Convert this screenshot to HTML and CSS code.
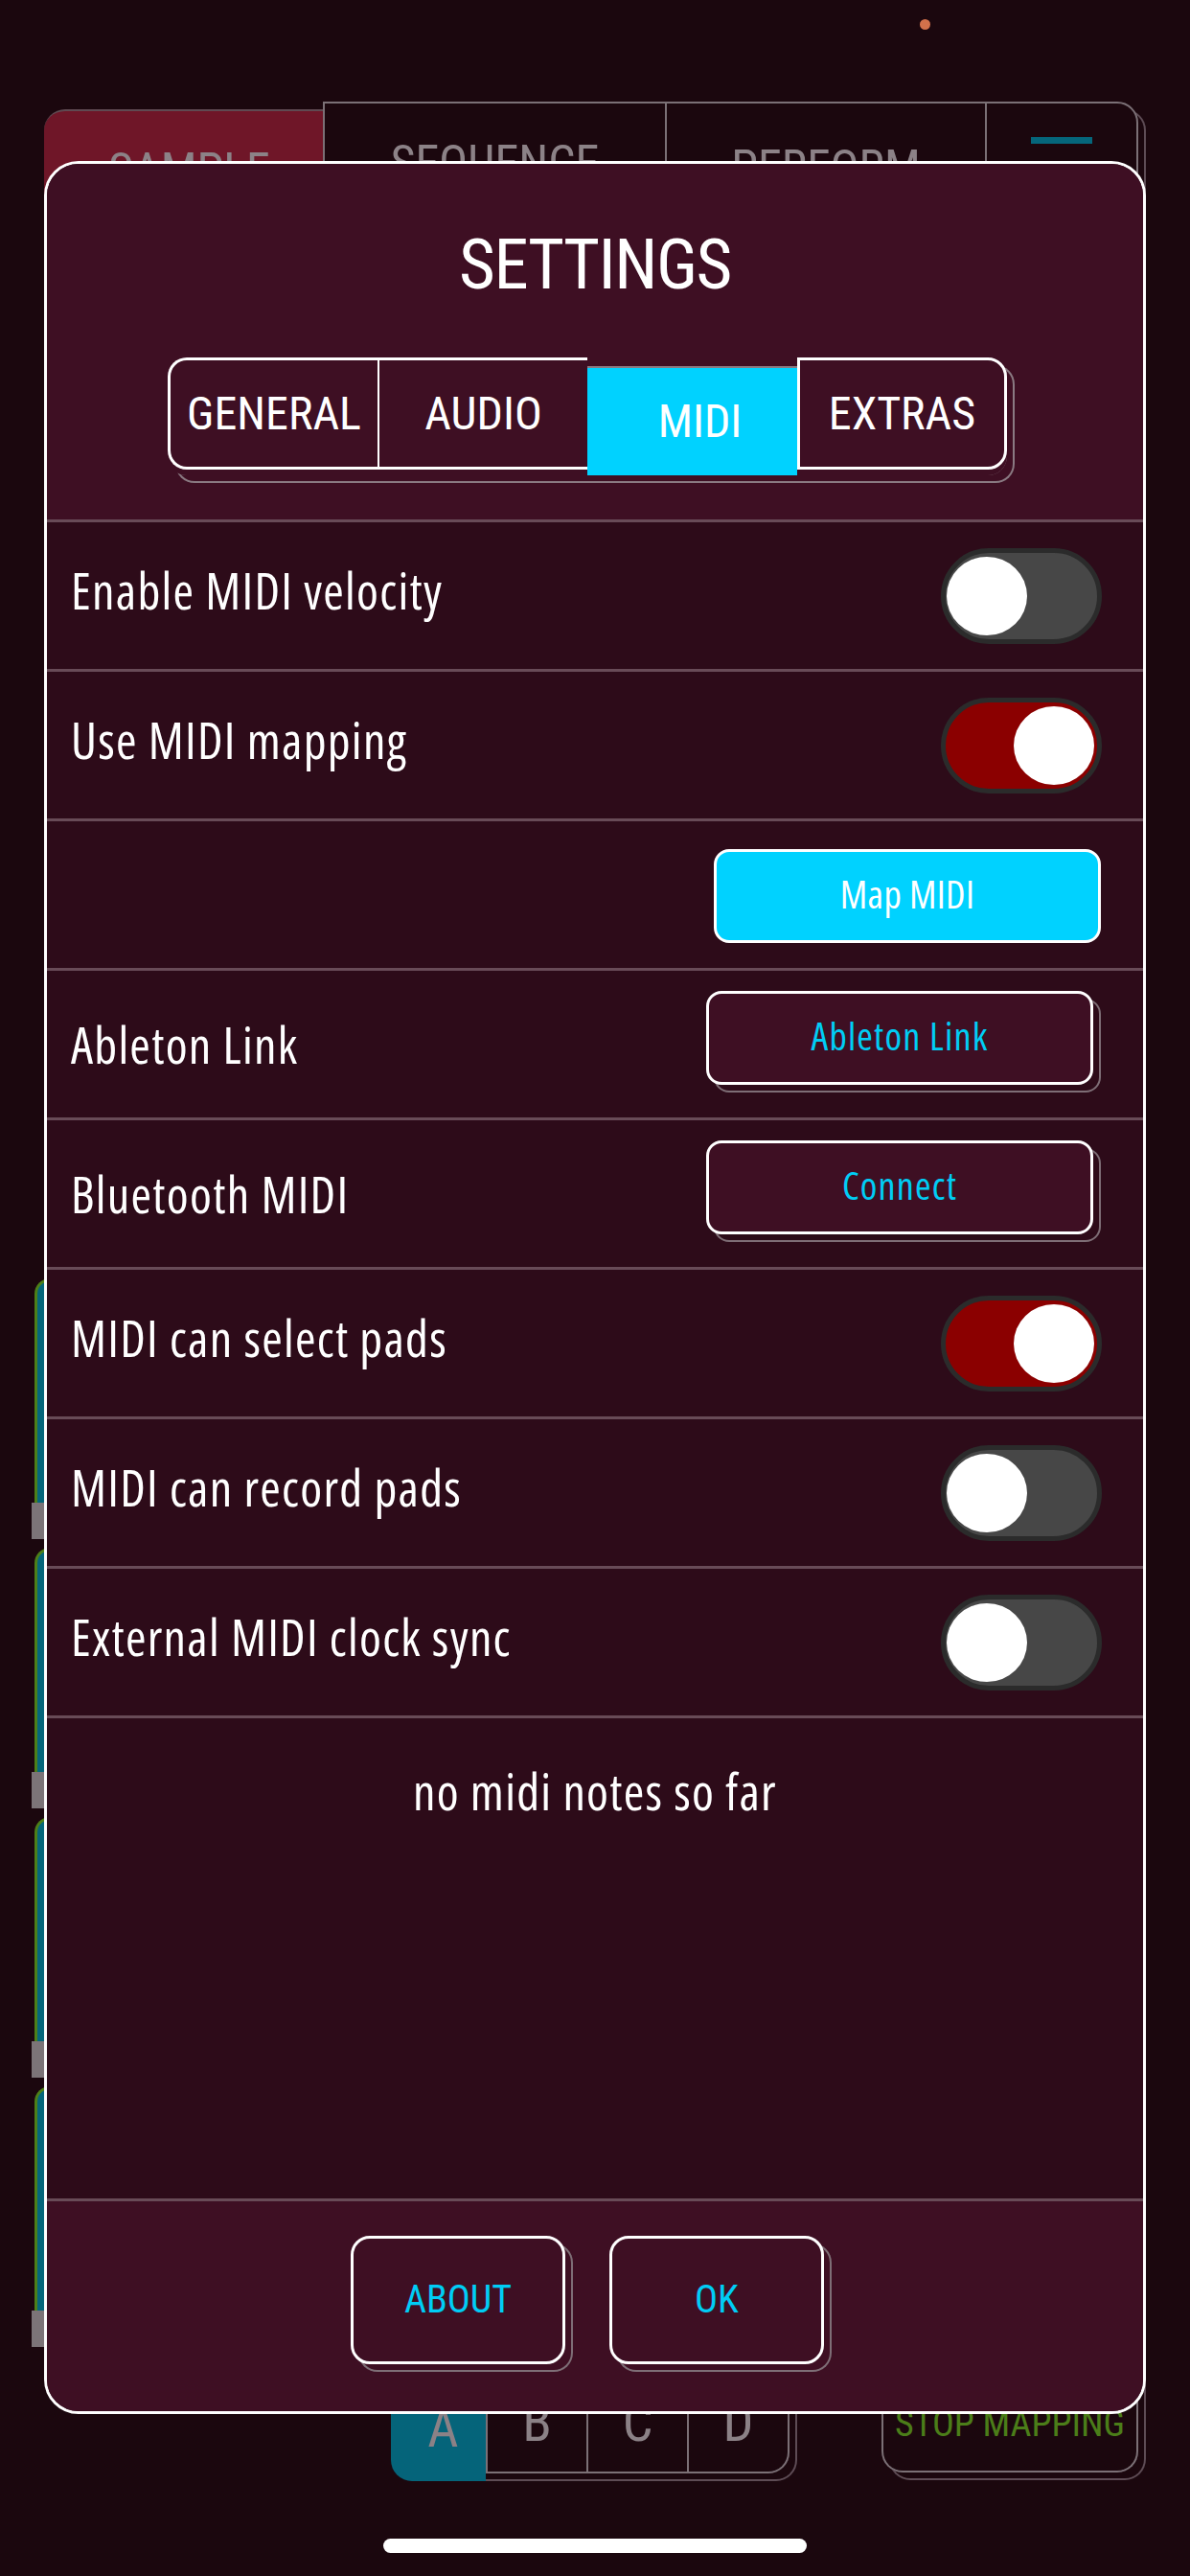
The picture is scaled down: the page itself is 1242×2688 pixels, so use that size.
FILE: index.html
```html
<!DOCTYPE html>
<html lang="en">
<head>
<meta charset="utf-8">
<title>Settings</title>
<link rel="stylesheet" href="styles.css">
</head>
<body>
<div class="app">
  <div class="status"><span class="mic-dot"></span></div>

  <nav class="topnav">
    <div class="nav-sample"><span>SAMPLE</span></div>
    <div class="nav-box">
      <div class="nav-cell nav-seq"><span>SEQUENCE</span></div>
      <div class="nav-cell nav-perf"><span>PERFORM</span></div>
      <div class="nav-cell nav-menu"><span class="bar"></span><span class="bar"></span><span class="bar"></span></div>
    </div>
  </nav>

  <div class="pads">
    <div class="pad"><div class="pad-body"></div><div class="pad-foot"></div></div>
    <div class="pad"><div class="pad-body"></div><div class="pad-foot"></div></div>
    <div class="pad"><div class="pad-body"></div><div class="pad-foot"></div></div>
    <div class="pad"><div class="pad-body"></div><div class="pad-foot"></div></div>
  </div>

  <div class="bottombar">
    <div class="banks">
      <div class="bank bank-active"><span>A</span></div>
      <div class="bank"><span>B</span></div>
      <div class="bank"><span>C</span></div>
      <div class="bank"><span>D</span></div>
    </div>
    <div class="stopmap"><span>STOP MAPPING</span></div>
  </div>

  <div class="home"></div>
</div>

<div class="dialog">
  <div class="dlg-head">
    <div class="title">SETTINGS</div>
    <div class="tabs">
      <div class="tab tab-first">GENERAL</div>
      <div class="tab tab-mid">AUDIO</div>
      <div class="tab tab-active">MIDI</div>
      <div class="tab tab-last">EXTRAS</div>
    </div>
  </div>

  <div class="row">
    <span class="label">Enable MIDI velocity</span>
    <span class="toggle"><span class="knob"></span></span>
  </div>
  <div class="row">
    <span class="label">Use MIDI mapping</span>
    <span class="toggle toggle-on"><span class="knob"></span></span>
  </div>
  <div class="row row-end">
    <span class="btn btn-pressed">Map MIDI</span>
  </div>
  <div class="row row-btn">
    <span class="label">Ableton Link</span>
    <span class="btn">Ableton Link</span>
  </div>
  <div class="row row-btn">
    <span class="label">Bluetooth MIDI</span>
    <span class="btn">Connect</span>
  </div>
  <div class="row">
    <span class="label">MIDI can select pads</span>
    <span class="toggle toggle-on"><span class="knob"></span></span>
  </div>
  <div class="row">
    <span class="label">MIDI can record pads</span>
    <span class="toggle"><span class="knob"></span></span>
  </div>
  <div class="row">
    <span class="label">External MIDI clock sync</span>
    <span class="toggle"><span class="knob"></span></span>
  </div>

  <div class="notes">no midi notes so far</div>

  <div class="dlg-foot">
    <span class="fbtn">ABOUT</span>
    <span class="fbtn">OK</span>
  </div>
</div>
</body>
</html>
```
FILE: styles.css
```css
html, body {
  margin: 0;
  padding: 0;
}
body {
  width: 1242px;
  height: 2688px;
  background: #1b070e;
  position: relative;
  overflow: hidden;
  font-family: "Open Sans", "DejaVu Sans", sans-serif;
  color: #fff;
}

/* ---------- background app ---------- */
.app {
  display: flex;
  flex-direction: column;
  height: 2688px;
}
.status {
  height: 106px;
  box-sizing: border-box;
  padding: 20px 0 0 960px;
  display: flex;
  align-items: flex-start;
}
.mic-dot {
  width: 11px;
  height: 11px;
  border-radius: 50%;
  background: #d2714b;
}

.topnav {
  display: flex;
  align-items: flex-start;
  margin-left: 46px;
  height: 128px;
  font-family: Roboto, "DejaVu Sans", sans-serif;
  font-stretch: 75%;
  font-size: 50px;
  line-height: 50px;
  color: #8c8287;
}
.nav-sample {
  width: 291px;
  height: 120px;
  margin-top: 8px;
  box-sizing: border-box;
  background: #6f1628;
  border-top: 2px solid #5f4a52;
  border-radius: 22px 0 0 0;
  padding: 37px 0 0 12px;
  text-align: center;
}
.nav-box {
  width: 851px;
  height: 128px;
  box-sizing: border-box;
  display: flex;
  border: 2px solid #7b7076;
  border-radius: 0 22px 0 0;
  background: #1b070e;
  box-shadow: 8px 8px 0 -2px #1b070e, 8px 8px 0 0 #5e4c55;
}
.nav-cell {
  box-sizing: border-box;
  text-align: center;
}
.nav-seq { width: 355px; padding-top: 37px; }
.nav-perf { width: 334px; padding-top: 42px; border-left: 2px solid #7b7076; }
.nav-menu {
  flex: 1;
  border-left: 2px solid #7b7076;
  display: flex;
  flex-direction: column;
  align-items: center;
  gap: 22px;
  padding-top: 35px;
}
.nav-menu .bar {
  width: 64px;
  height: 7px;
  background: #05667b;
}

.pads {
  margin-top: 1100px;
  display: flex;
  flex-direction: column;
  gap: 9px;
}
.pad {
  margin-left: 33px;
  width: 300px;
}
.pad-body {
  height: 231px;
  margin-left: 3px;
  border-left: 3px solid #4d7f18;
  border-top: 3px solid #4d7f18;
  border-top-left-radius: 16px;
  background: #05667b;
}
.pad-foot {
  height: 38px;
  background: #7c7478;
}

.bottombar {
  display: flex;
  align-items: flex-start;
  margin-top: 12px;
  padding-left: 408px;
  font-family: Roboto, "DejaVu Sans", sans-serif;
  font-stretch: 75%;
}
.banks {
  width: 416px;
  height: 120px;
  box-sizing: border-box;
  display: flex;
  border: 2px solid #7b7076;
  border-left: none;
  border-radius: 0 0 22px 22px;
  box-shadow: 8px 8px 0 -2px #1b070e, 8px 8px 0 0 #5e4c55;
}
.bank {
  flex: 1;
  box-sizing: border-box;
  border-left: 2px solid #7b7076;
  text-align: center;
  font-size: 56px;
  line-height: 56px;
  padding-top: 37px;
  color: #8b8186;
}
.bank-active {
  flex: 0 0 99px;
  height: 126px;
  border-left: none;
  background: #05647a;
  border-radius: 0 0 0 22px;
  padding: 43px 0 0 10px;
}
.stopmap {
  width: 268px;
  height: 120px;
  margin-left: 96px;
  margin-top: -1px;
  box-sizing: border-box;
  border: 2px solid #7b7076;
  border-top: none;
  border-radius: 0 0 22px 22px;
  box-shadow: 8px 8px 0 -2px #1b070e, 8px 8px 0 0 #5e4c55;
  text-align: center;
  font-size: 38px;
  line-height: 38px;
  padding-top: 50px;
  color: #4b7d19;
}
.home {
  margin: 68px 0 0 400px;
  width: 442px;
  height: 15px;
  border-radius: 8px;
  background: #fff;
}

/* ---------- settings dialog ---------- */
.dialog {
  position: absolute;
  left: 46px;
  top: 168px;
  width: 1150px;
  height: 2351px;
  box-sizing: border-box;
  border: 3px solid #fff;
  border-radius: 36px;
  background: #2d0b19;
  overflow: hidden;
  display: flex;
  flex-direction: column;
}
.dlg-head {
  flex: 0 0 371px;
  background: #3e0f23;
  display: flex;
  flex-direction: column;
  align-items: flex-start;
}
.title {
  align-self: stretch;
  margin-top: 68px;
  text-align: center;
  font-family: Roboto, "DejaVu Sans", sans-serif;
  font-stretch: 75%;
  font-size: 73px;
  line-height: 75px;
  letter-spacing: -1.5px;
}
.tabs {
  margin: 59px 0 0 126px;
  display: flex;
  align-items: flex-start;
  border-radius: 20px;
  box-shadow: 8px 8px 0 -2px #3e0f23, 8px 8px 0 0 #8a7a82;
  font-family: Roboto, "DejaVu Sans", sans-serif;
  font-stretch: 75%;
  font-size: 48px;
  line-height: 48px;
}
.tab {
  width: 219px;
  height: 117px;
  box-sizing: border-box;
  display: flex;
  align-items: center;
  justify-content: center;
  background: #3e0f23;
  border-top: 3px solid #fff;
  border-bottom: 3px solid #fff;
}
.tab-first {
  border-left: 3px solid #fff;
  border-radius: 20px 0 0 20px;
}
.tab-mid {
  border-left: 2px solid #fff;
}
.tab-active {
  height: 114px;
  margin-top: 9px;
  padding-left: 16px;
  background: #00d2ff;
  border-top: 2px solid #8a7a82;
  border-bottom: none;
}
.tab-last {
  border-left: 3px solid #fff;
  border-right: 3px solid #fff;
  border-radius: 0 20px 20px 0;
}

.row {
  flex: 0 0 156px;
  box-sizing: border-box;
  border-top: 3px solid #684b57;
  display: flex;
  align-items: center;
  justify-content: space-between;
  padding: 0 43px 0 25px;
}
.row-end {
  justify-content: flex-end;
}
.label {
  font-stretch: 75%;
  font-size: 52px;
  line-height: 52px;
  letter-spacing: 1.3px;
  padding-bottom: 12px;
  white-space: nowrap;
}
.row-btn .label {
  padding-bottom: 0;
}
.toggle {
  width: 168px;
  height: 100px;
  box-sizing: border-box;
  border: 5px solid #2b2b2b;
  border-radius: 50px;
  background: #474747;
  display: flex;
  align-items: center;
  padding: 0 1px;
}
.toggle-on {
  background: #8b0000;
  justify-content: flex-end;
  padding: 0 3px;
}
.knob {
  width: 84px;
  height: 82px;
  border-radius: 50%;
  background: #fff;
}
.btn {
  width: 404px;
  height: 98px;
  box-sizing: border-box;
  margin: 0 9px 14px 0;
  border: 3px solid #fff;
  border-radius: 16px;
  background: #3e0f23;
  box-shadow: 8px 8px 0 -2px #2d0b19, 8px 8px 0 0 #7e6e76;
  display: flex;
  align-items: center;
  justify-content: center;
  color: #00cdf5;
  font-stretch: 75%;
  font-size: 40px;
  line-height: 40px;
  letter-spacing: 1.2px;
  padding-bottom: 4px;
}
.btn-pressed {
  transform: translate(8px, 8px);
  box-shadow: none;
  background: #00d2ff;
  color: #fff;
  letter-spacing: 0.4px;
}

.notes {
  flex: 1;
  border-top: 3px solid #684b57;
  padding-top: 50px;
  text-align: center;
  font-stretch: 75%;
  font-size: 52px;
  line-height: 52px;
  letter-spacing: 1.3px;
}

.dlg-foot {
  flex: 0 0 222px;
  box-sizing: border-box;
  border-top: 3px solid #684b57;
  background: #3e0f23;
  display: flex;
  justify-content: center;
  align-items: flex-start;
  gap: 46px;
  padding: 36px 16px 0 0;
}
.fbtn {
  width: 224px;
  height: 134px;
  box-sizing: border-box;
  border: 3px solid #fff;
  border-radius: 20px;
  background: #3e0f23;
  box-shadow: 8px 8px 0 -2px #3e0f23, 8px 8px 0 0 #7e6e76;
  display: flex;
  align-items: center;
  justify-content: center;
  color: #00cdf5;
  font-family: Roboto, "DejaVu Sans", sans-serif;
  font-stretch: 75%;
  font-size: 40px;
  line-height: 40px;
}
```
